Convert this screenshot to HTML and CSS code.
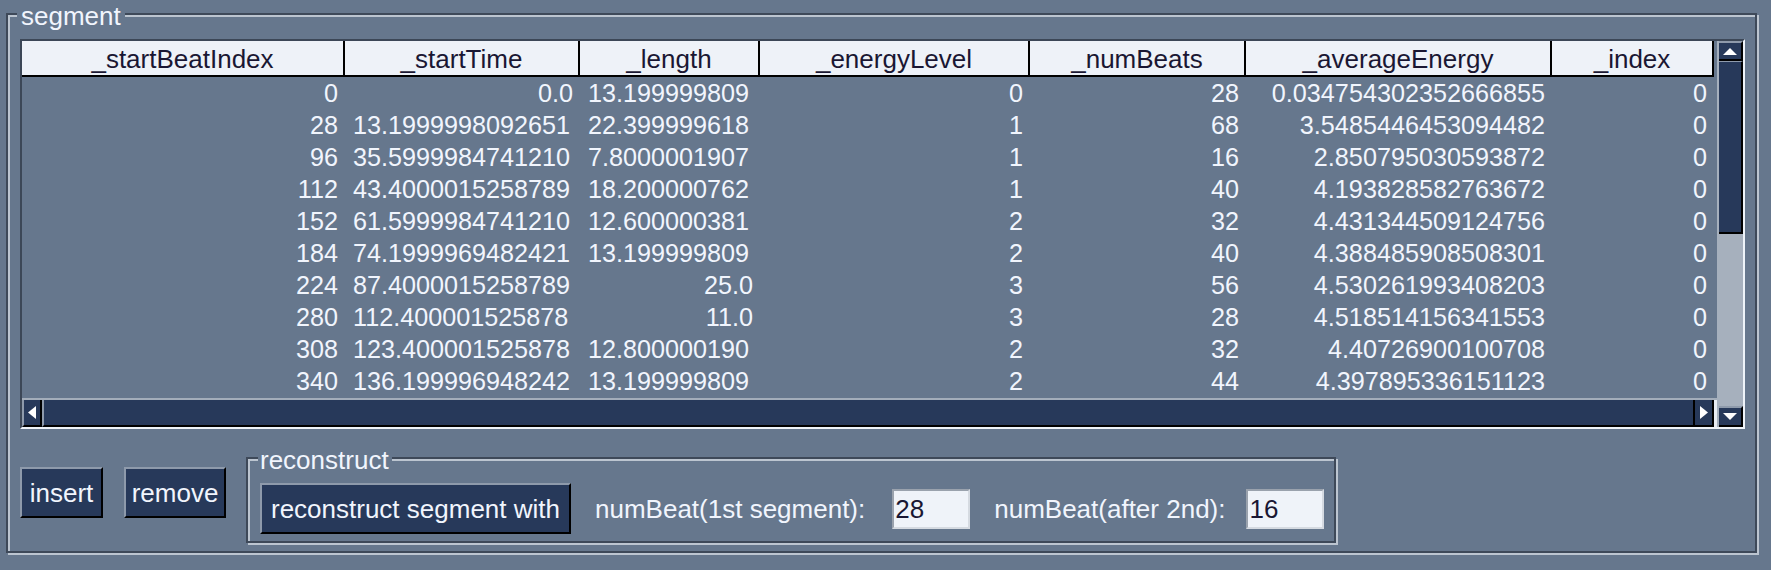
FILE: index.html
```html
<!DOCTYPE html>
<html>
<head>
<meta charset="utf-8">
<link rel="stylesheet" href="styles.css">
</head>
<body>
<div class="panel">
  <span class="legend legend-main">segment</span>
  <div class="scrollpane">
    <div class="viewport">
      <div class="thead">
        <div class="th">_startBeatIndex</div>
        <div class="th">_startTime</div>
        <div class="th">_length</div>
        <div class="th">_energyLevel</div>
        <div class="th">_numBeats</div>
        <div class="th">_averageEnergy</div>
        <div class="th">_index</div>
      </div>
      <div class="tbody">
        <div class="tr"><div class="td"><span>0</span></div><div class="td"><span>0.0</span></div><div class="td cut"><span>13.199999809</span></div><div class="td"><span>0</span></div><div class="td"><span>28</span></div><div class="td"><span>0.034754302352666855</span></div><div class="td"><span>0</span></div></div>
        <div class="tr"><div class="td"><span>28</span></div><div class="td cut"><span>13.1999998092651</span></div><div class="td cut"><span>22.399999618</span></div><div class="td"><span>1</span></div><div class="td"><span>68</span></div><div class="td"><span>3.5485446453094482</span></div><div class="td"><span>0</span></div></div>
        <div class="tr"><div class="td"><span>96</span></div><div class="td cut"><span>35.5999984741210</span></div><div class="td cut"><span>7.8000001907</span></div><div class="td"><span>1</span></div><div class="td"><span>16</span></div><div class="td"><span>2.850795030593872</span></div><div class="td"><span>0</span></div></div>
        <div class="tr"><div class="td"><span>112</span></div><div class="td cut"><span>43.4000015258789</span></div><div class="td cut"><span>18.200000762</span></div><div class="td"><span>1</span></div><div class="td"><span>40</span></div><div class="td"><span>4.193828582763672</span></div><div class="td"><span>0</span></div></div>
        <div class="tr"><div class="td"><span>152</span></div><div class="td cut"><span>61.5999984741210</span></div><div class="td cut"><span>12.600000381</span></div><div class="td"><span>2</span></div><div class="td"><span>32</span></div><div class="td"><span>4.431344509124756</span></div><div class="td"><span>0</span></div></div>
        <div class="tr"><div class="td"><span>184</span></div><div class="td cut"><span>74.1999969482421</span></div><div class="td cut"><span>13.199999809</span></div><div class="td"><span>2</span></div><div class="td"><span>40</span></div><div class="td"><span>4.388485908508301</span></div><div class="td"><span>0</span></div></div>
        <div class="tr"><div class="td"><span>224</span></div><div class="td cut"><span>87.4000015258789</span></div><div class="td"><span>25.0</span></div><div class="td"><span>3</span></div><div class="td"><span>56</span></div><div class="td"><span>4.530261993408203</span></div><div class="td"><span>0</span></div></div>
        <div class="tr"><div class="td"><span>280</span></div><div class="td cut"><span>112.400001525878</span></div><div class="td"><span>11.0</span></div><div class="td"><span>3</span></div><div class="td"><span>28</span></div><div class="td"><span>4.518514156341553</span></div><div class="td"><span>0</span></div></div>
        <div class="tr"><div class="td"><span>308</span></div><div class="td cut"><span>123.400001525878</span></div><div class="td cut"><span>12.800000190</span></div><div class="td"><span>2</span></div><div class="td"><span>32</span></div><div class="td"><span>4.40726900100708</span></div><div class="td"><span>0</span></div></div>
        <div class="tr"><div class="td"><span>340</span></div><div class="td cut"><span>136.199996948242</span></div><div class="td cut"><span>13.199999809</span></div><div class="td"><span>2</span></div><div class="td"><span>44</span></div><div class="td"><span>4.397895336151123</span></div><div class="td"><span>0</span></div></div>
      </div>
    </div>
    <div class="vscroll">
      <div class="sb vbtn-up"><svg width="14" height="7" viewBox="0 0 14 7"><polygon points="0,7 14,7 7,0" fill="#ffffff"/></svg></div>
      <div class="sb vthumb"></div>
      <div class="vtrack"></div>
      <div class="sb vbtn-down"><svg width="14" height="7" viewBox="0 0 14 7"><polygon points="0,0 14,0 7,7" fill="#ffffff"/></svg></div>
    </div>
    <div class="hscroll">
      <div class="sb hbtn-left"><svg width="8" height="13" viewBox="0 0 8 13"><polygon points="8,0 8,13 0,6.5" fill="#ffffff"/></svg></div>
      <div class="sb hthumb"></div>
      <div class="sb hbtn-right"><svg width="8" height="13" viewBox="0 0 8 13"><polygon points="0,0 0,13 8,6.5" fill="#ffffff"/></svg></div>
      <div class="hcorner"></div>
    </div>
  </div>
  <div class="controls">
    <button class="btn btn-insert">insert</button>
    <button class="btn btn-remove">remove</button>
    <div class="group">
      <span class="legend legend-sub">reconstruct</span>
      <button class="btn btn-reconstruct">reconstruct segment with</button>
      <span class="label label-first">numBeat(1st segment):</span>
      <div class="field field-first">28</div>
      <span class="label label-second">numBeat(after 2nd):</span>
      <div class="field field-second">16</div>
    </div>
  </div>
</div>
</body>
</html>
```
FILE: styles.css
```css
* { box-sizing: border-box; }

html, body {
  margin: 0;
  background: #66778d;
}

body {
  font-family: "Liberation Sans", Arial, sans-serif;
  font-size: 26px;
  color: #f1f5fd;
  width: 1771px;
  height: 570px;
  overflow: hidden;
  padding: 13px 0 0 6px;
}

.panel {
  position: relative;
  width: 1751px;
  height: 540px;
  border: 2px solid #3e4959;
  box-shadow: inset 2px 2px 0 #bcc5d0, 2px 2px 0 #bcc5d0;
  padding: 24px 10px 8px 12px;
}

.legend {
  position: absolute;
  top: -14px;
  background: #66778d;
  line-height: 30px;
  white-space: nowrap;
}

.legend-main { left: 9px; padding: 0 4px; }
.legend-sub { left: 10px; padding: 0 3px 0 2px; }

.scrollpane {
  width: 1725px;
  height: 390px;
  border-top: 2px solid #3c4757;
  border-left: 2px solid #3c4757;
  border-right: 2px solid #eef3f9;
  border-bottom: 2px solid #eef3f9;
  display: grid;
  grid-template-columns: 1fr 26px;
  grid-template-rows: 1fr 29px;
}

.viewport {
  grid-column: 1;
  grid-row: 1;
  overflow: hidden;
}

.thead, .tr {
  display: grid;
  grid-template-columns: 323px 235px 180px 270px 216px 306px 162px;
  width: 1692px;
}

.thead {
  background: #eef2f8;
  border-bottom: 2px solid #000;
}

.th {
  height: 34px;
  border-right: 2px solid #000;
  text-align: center;
  color: #1a1733;
  line-height: 32px;
  padding-top: 2px;
  white-space: nowrap;
  overflow: hidden;
}

.tr { height: 32px; }

.td {
  font-size: 25.2px;
  line-height: 32px;
  padding: 0 7px;
  text-align: right;
  white-space: nowrap;
}

.td.cut { text-align: left; padding-left: 8px; }

.td > span {
  display: block;
  overflow: hidden;
}

.vscroll {
  grid-column: 2;
  grid-row: 1 / 3;
  background: #a6b0bd;
  padding-left: 2px;
  display: flex;
  flex-direction: column;
}

.sb {
  background: #27395a;
  border-top: 2px solid #8e9aab;
  border-right: 2px solid #000;
  border-bottom: 2px solid #000;
  display: flex;
  align-items: center;
  justify-content: center;
}

.sb svg { display: block; }

.vbtn-up { height: 20px; flex: none; }
.vthumb { height: 173px; flex: none; border-top-width: 1px; }
.vtrack { flex: 1; }
.vbtn-down { height: 21px; flex: none; }

.hscroll {
  grid-column: 1;
  grid-row: 2;
  background: #a3adba;
  padding-top: 2px;
  display: flex;
}

.hscroll .sb { border-top: 0; }

.hbtn-left {
  width: 20px;
  flex: none;
  border-left: 2px solid #8e9aab;
}

.hthumb {
  flex: 1;
  border-left: 2px solid #8e9aab;
}

.hbtn-right {
  width: 19px;
  flex: none;
}

.hcorner {
  width: 3px;
  flex: none;
  background: #e8edf4;
}

.controls {
  display: flex;
  align-items: flex-start;
  margin-top: 28px;
}

.btn {
  font: inherit;
  color: inherit;
  background: #27395a;
  border-style: solid;
  border-width: 2px;
  border-color: #8e9aab #000 #000 #8e9aab;
  height: 51px;
  margin: 0;
  padding: 2px 0 0 0;
  text-align: center;
  white-space: nowrap;
  flex: none;
}

.btn-insert { width: 83px; margin-top: 10px; margin-right: 21px; }
.btn-remove { width: 102px; margin-top: 10px; margin-right: 20px; }
.btn-reconstruct { width: 311px; }

.group {
  position: relative;
  width: 1090px;
  height: 86px;
  border: 2px solid #3e4959;
  box-shadow: inset 2px 2px 0 #bcc5d0, 2px 2px 0 #bcc5d0;
  padding: 24px 10px 7px 12px;
  display: flex;
  align-items: center;
  flex: none;
}

.label {
  white-space: nowrap;
  padding-top: 2px;
  flex: none;
}

.label-first { margin-left: 24px; }
.label-second { margin-left: 24px; }

.field {
  width: 78px;
  height: 40px;
  background: #eff3f9;
  border: 2px solid;
  border-color: #9aa2ad #d5dae1 #d5dae1 #9aa2ad;
  color: #1a1733;
  padding: 0 1px;
  line-height: 36px;
  flex: none;
}

.field-first { margin-left: 27px; }
.field-second { margin-left: 21px; }
```
